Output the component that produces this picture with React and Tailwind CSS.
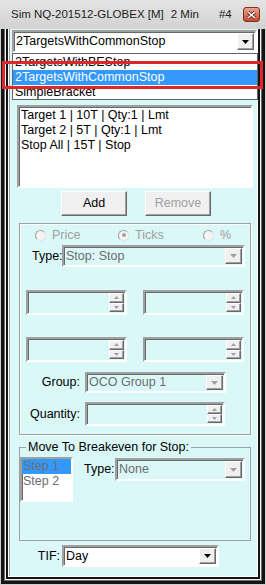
import React from "react";

const sunken =
  "border-2 border-t-[#a0a0a0] border-l-[#a0a0a0] border-r-white border-b-white shadow-[inset_1px_1px_0_#696969]";
const raised =
  "bg-[#f0f0f0] border border-t-white border-l-white border-r-[#696969] border-b-[#696969] shadow-[inset_-1px_-1px_0_#a0a0a0]";
const etched = "border border-[#a0a0a0] shadow-[inset_1px_1px_0_#fff,1px_1px_0_#fff]";

function Tri({ up, color = "#000" }) {
  return (
    <svg width="7" height="4" viewBox="0 0 7 4">
      <path d={up ? "M0 4h7L3.5 0z" : "M0 0h7L3.5 4z"} fill={color} />
    </svg>
  );
}

function Combo({ text, disabled, className }) {
  return (
    <div className={`${sunken} flex items-stretch ${disabled ? "" : "bg-white"} ${className}`}>
      <div
        className={`flex-1 flex items-center pl-[2px] text-[12.5px] ${
          disabled ? "text-[#6d6d6d]" : "text-black"
        }`}
      >
        {text}
      </div>
      <div className={`${raised} w-[17px] m-px flex items-center justify-center`}>
        <Tri color={disabled ? "#a0a0a0" : "#000"} />
      </div>
    </div>
  );
}

function Spin({ className }) {
  return (
    <div className={`${sunken} flex justify-end ${className}`}>
      <div className="flex flex-col w-[15px] my-px mr-px">
        <div className={`${raised} flex-1 flex items-center justify-center`}>
          <svg width="5" height="3" viewBox="0 0 5 3">
            <path d="M0 3h5L2.5 0z" fill="#a0a0a0" />
          </svg>
        </div>
        <div className={`${raised} flex-1 flex items-center justify-center`}>
          <svg width="5" height="3" viewBox="0 0 5 3">
            <path d="M0 0h5L2.5 3z" fill="#a0a0a0" />
          </svg>
        </div>
      </div>
    </div>
  );
}

function Radio({ label, checked, className }) {
  return (
    <div className={`flex items-center ${className}`}>
      <span className="w-[11px] h-[11px] rounded-full border border-t-[#a0a0a0] border-l-[#a0a0a0] border-r-[#e3e3e3] border-b-[#e3e3e3] bg-[#f4f4f4] flex items-center justify-center">
        {checked && <span className="w-[4px] h-[4px] rounded-full bg-[#a0a0a0]" />}
      </span>
      <span className="ml-[6px] text-[12.5px] leading-[12px] text-[#a0a0a0]">{label}</span>
    </div>
  );
}

export default function App() {
  return (
    <div className="relative w-[266px] h-[585px] flex flex-col overflow-hidden bg-[#d6d6d6] font-['Liberation_Sans',Arial,sans-serif]">
      {/* title bar */}
      <div className="h-[29px] shrink-0 flex items-center pl-[11px] pr-[6px] bg-linear-to-b from-[#e4e4e4] to-[#d2d2d2] text-[11.5px] text-[#1e1e1e]">
        <span>Sim NQ-201512-GLOBEX [M]</span>
        <span className="ml-[7px]">2 Min</span>
        <span className="ml-[20px]">#4</span>
        <div className="ml-auto w-[17px] h-[15px] rounded-[3px] border border-[#7d3324] bg-linear-to-b from-[#e9a392] to-[#c5452b] flex items-center justify-center">
          <svg width="9" height="8" viewBox="0 0 9 8">
            <path d="M1 1l7 6M8 1L1 7" stroke="#5a2418" strokeWidth="3" />
            <path d="M1 1l7 6M8 1L1 7" stroke="#fff" strokeWidth="1.6" />
          </svg>
        </div>
      </div>

      {/* frame */}
      <div className="flex-1 flex flex-col border-l border-r border-b border-[#cfcfcf]">
        <div className="flex-1 flex flex-col border-l-[3px] border-r-[3px] border-b-[3px] border-[#141414]">
          <div className="flex-1 flex flex-col border-l border-r border-b border-[#6a6a6a]">
            <div className="flex-1 flex flex-col border-l border-r border-b border-[#f4f4f4]">
              <div className="flex-1 flex flex-col border-l-2 border-r-2 border-b-2 border-[#141414]">
                <div className="flex-1 flex flex-col border-l border-r border-b border-white">
                  <div className="flex-1 flex flex-col border-l border-[#a0a0a0] bg-[#daf8f8] pt-px">
                    <Combo text="2TargetsWithCommonStop" className="ml-[2px] w-[245px] h-[23px]" />

                    <div className={`${sunken} bg-white mt-[52px] ml-[7px] w-[236px] h-[83px] pt-px pl-[2px] text-[12.5px] leading-[15px] text-black`}>
                      <div>Target 1 | 10T | Qty:1 | Lmt</div>
                      <div>Target 2 | 5T | Qty:1 | Lmt</div>
                      <div>Stop All | 15T | Stop</div>
                    </div>

                    <div className="flex mt-[3px] ml-[51px] gap-[18px]">
                      <div className={`${raised} w-[66px] h-[25px] flex items-center justify-center text-[12.5px] text-black`}>
                        Add
                      </div>
                      <div className={`${raised} w-[66px] h-[25px] flex items-center justify-center text-[12.5px] text-[#a0a0a0]`}>
                        Remove
                      </div>
                    </div>

                    {/* order settings group */}
                    <div className={`${etched} ml-[9px] mt-[7px] w-[232px] h-[212px] flex flex-col`}>
                      <div className="flex mt-[5px] h-[12px]">
                        <Radio label="Price" className="ml-[15px] w-[83px]" />
                        <Radio label="Ticks" checked className="w-[85px]" />
                        <Radio label="%" />
                      </div>
                      <div className="flex items-center mt-[4px]">
                        <span className="ml-[12px] w-[30px] text-[12.5px] text-black">Type:</span>
                        <Combo text="Stop: Stop" disabled className="w-[183px] h-[22px]" />
                      </div>
                      <div className="flex mt-[23px] ml-[6px] gap-[16px]">
                        <Spin className="w-[101px] h-[25px]" />
                        <Spin className="w-[101px] h-[25px]" />
                      </div>
                      <div className="flex mt-[22px] ml-[6px] gap-[16px]">
                        <Spin className="w-[101px] h-[25px]" />
                        <Spin className="w-[101px] h-[25px]" />
                      </div>
                      <div className="flex items-center mt-[10px]">
                        <span className="w-[60px] text-right text-[12.5px] text-black">Group:</span>
                        <Combo text="OCO Group 1" disabled className="ml-[5px] w-[141px] h-[21px]" />
                      </div>
                      <div className="flex items-center mt-[9px]">
                        <span className="w-[60px] text-right text-[12.5px] text-black">Quantity:</span>
                        <Spin className="ml-[5px] w-[140px] h-[24px]" />
                      </div>
                    </div>

                    {/* breakeven group */}
                    <fieldset className="border border-[#a0a0a0] ml-[9px] mt-[5px] w-[232px] h-[101px]">
                      <legend className="ml-[6px] px-[2px] bg-[#daf8f8] text-[12.5px] leading-[14px] text-black">
                        Move To Breakeven for Stop:
                      </legend>
                      <div className="flex items-start">
                        <div className={`${sunken} bg-white mt-[3px] w-[53px] h-[45px] text-[12.5px] leading-[15px] text-[#6d6d6d]`}>
                          <div className="bg-[#3399ff] pl-px">Step 1</div>
                          <div className="pl-px">Step 2</div>
                        </div>
                        <div className="flex items-center mt-[4px] ml-[11px]">
                          <span className="w-[31px] text-[12.5px] text-black">Type:</span>
                          <Combo text="None" disabled className="w-[130px] h-[23px]" />
                        </div>
                      </div>
                    </fieldset>

                    <div className="flex items-center mt-[4px]">
                      <span className="w-[50px] text-right text-[12.5px] text-black">TIF:</span>
                      <Combo text="Day" className="ml-[2px] w-[157px] h-[22px]" />
                    </div>
                  </div>
                </div>
              </div>
            </div>
          </div>
        </div>
      </div>

      {/* open dropdown list */}
      <div className="absolute top-[53px] left-[12px] w-[246px] h-[47px] bg-white border border-[#646464] overflow-hidden pt-px text-[12.5px] leading-[15px]">
        <div className="pl-[2px] text-black">2TargetsWithBEStop</div>
        <div className="pl-[2px] bg-[#3399ff] text-white">2TargetsWithCommonStop</div>
        <div className="pl-[2px] text-black">SimpleBracket</div>
      </div>

      {/* annotation */}
      <div className="absolute left-[2px] top-[61px] w-[261px] h-[28px] border-[3px] border-[#e0252b]" />
    </div>
  );
}
